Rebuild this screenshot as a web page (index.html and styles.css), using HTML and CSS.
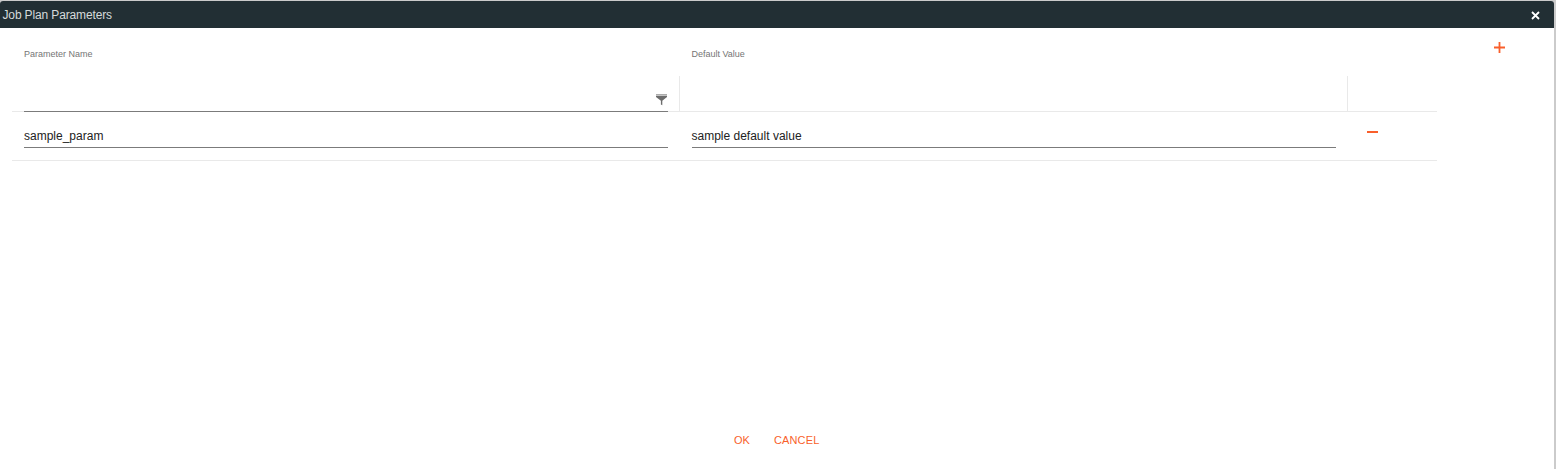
FILE: index.html
```html
<!DOCTYPE html>
<html lang="en">
<head>
<meta charset="utf-8">
<title>Job Plan Parameters</title>
<link rel="stylesheet" href="styles.css">
</head>
<body>
<div class="dialog">
  <header class="titlebar">
    <h1 class="title">Job Plan Parameters</h1>
    <button class="close" aria-label="Close"><svg width="9" height="9" viewBox="0 0 9 9"><path d="M1 1l7 7M8 1L1 8" stroke="#fff" stroke-width="1.800"/></svg></button>
  </header>
  <main class="content">
    <div class="grid">
      <div class="row head">
        <div class="cell"><span class="label">Parameter Name</span></div>
        <div class="cell"><span class="label">Default Value</span></div>
        <div class="cell"></div>
      </div>
      <div class="row filters">
        <div class="cell"><div class="field filter"><svg width="11" height="12" viewBox="0 0 11 12"><path d="M0 .3h11v1.200H0z" fill="#888"/><path d="M0 2h11v1L6.300 6.700V11.300L4.900 10.500V6.700L0 3z" fill="#6c6c6c"/></svg></div></div>
        <div class="cell"></div>
        <div class="cell"></div>
      </div>
      <div class="row data">
        <div class="cell"><div class="field"><span class="value">sample_param</span></div></div>
        <div class="cell"><div class="field"><span class="value">sample default value</span></div></div>
        <div class="cell actions"><button aria-label="Remove"><svg width="11" height="2" viewBox="0 0 11 2"><path d="M0 1h11" stroke="#f95f2b" stroke-width="2"/></svg></button></div>
      </div>
    </div>
    <button class="add" aria-label="Add"><svg width="11" height="11" viewBox="0 0 11 11"><path d="M0 5.500h11M5.500 0v11" stroke="#f95f2b" stroke-width="1.800"/></svg></button>
  </main>
  <footer class="footer">
    <button class="ok">OK</button>
    <button class="cancel">CANCEL</button>
  </footer>
</div>
</body>
</html>
```
FILE: styles.css
```css
* { box-sizing: border-box; }
body {
  margin: 0;
  height: 469px;
  padding-top: 1px;
  overflow: hidden;
  background: #cbcbcb;
  font-family: "Liberation Sans", Arial, sans-serif;
  color: #222;
}
button { border: 0; padding: 0; background: none; font: inherit; }
svg { display: block; }
.dialog {
  display: flex;
  flex-direction: column;
  width: 1554px;
  height: 468px;
  background: #fff;
  border-radius: 3px 3px 0 0;
}
.titlebar {
  display: flex;
  align-items: center;
  justify-content: space-between;
  height: 27px;
  padding: 0 14px 0 2.5px;
  background: #222f34;
  border-radius: 3px 3px 0 0;
}
.title { margin: 0; padding-top: 1px; font-size: 12px; font-weight: 400; line-height: 27px; letter-spacing: -0.14px; color: #d5dadb; }
.close { padding-top: 1px; }
.content { display: flex; flex: 1; padding-left: 12px; }
.grid { width: 1425px; }
.row { display: grid; grid-template-columns: 667.500px 668px 1fr; }
.head { height: 48px; }
.head .cell { padding: 20px 12px 0; line-height: 12px; }
.label { display: block; font-size: 9px; color: #757575; }
.filters { height: 36px; }
.filters .cell { height: 36px; border-right: 1px solid #e9e9e9; border-bottom: 1px solid #e9e9e9; }
.filters .cell:last-child { border-right: 0; }
.filter { display: flex; justify-content: flex-end; align-items: flex-end; height: 36px; margin: 0 11px 0 12px; padding: 0 1px 5px 0; }
.field { border-bottom: 1px solid #7b7b7b; }
.data { height: 49px; border-bottom: 1px solid #e9e9e9; }
.data .cell { padding: 16px 12px 0; }
.data .field { height: 20px; line-height: 16px; }
.value { display: block; font-size: 12px; }
.data .actions { padding: 19px 0 0 19.5px; }
.actions button { display: block; }
.add { align-self: flex-start; margin: 14px 0 0 57px; }
.footer { display: flex; gap: 24px; height: 37px; padding: 2px 0 0 734px; font-size: 11px; line-height: 13px; align-items: flex-start; }
.footer button { color: #f95f2b; }
.footer .cancel { letter-spacing: 0.15px; }
```
